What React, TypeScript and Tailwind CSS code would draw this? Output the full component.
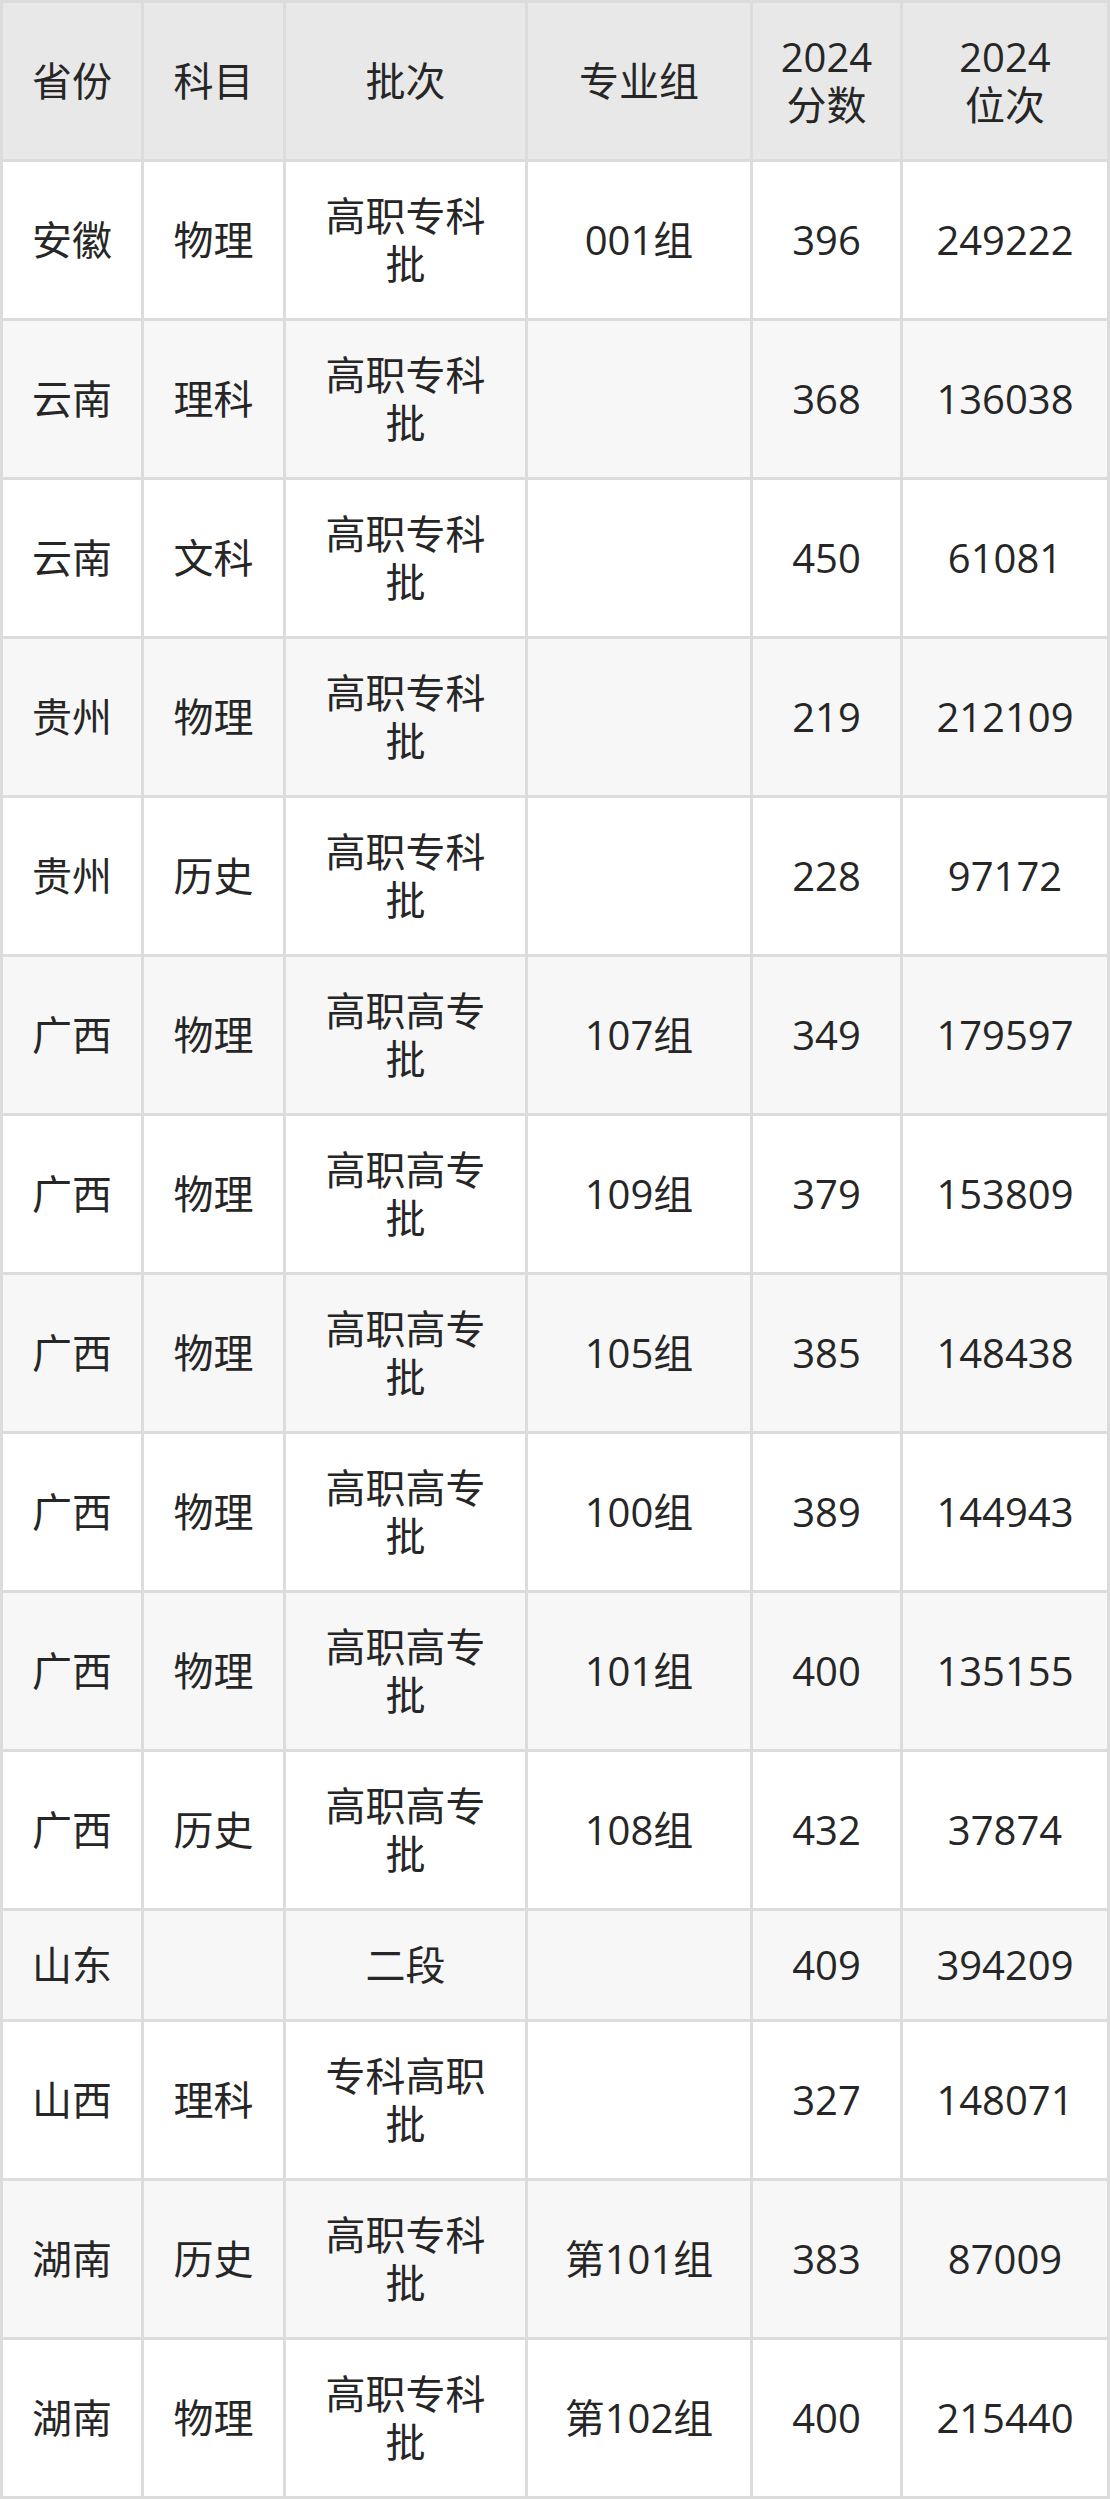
import React from "react";

type Row = [string, string, string, string, string, string];

const rows: Row[] = [
  ["安徽", "物理", "高职专科批", "001组", "396", "249222"],
  ["云南", "理科", "高职专科批", "", "368", "136038"],
  ["云南", "文科", "高职专科批", "", "450", "61081"],
  ["贵州", "物理", "高职专科批", "", "219", "212109"],
  ["贵州", "历史", "高职专科批", "", "228", "97172"],
  ["广西", "物理", "高职高专批", "107组", "349", "179597"],
  ["广西", "物理", "高职高专批", "109组", "379", "153809"],
  ["广西", "物理", "高职高专批", "105组", "385", "148438"],
  ["广西", "物理", "高职高专批", "100组", "389", "144943"],
  ["广西", "物理", "高职高专批", "101组", "400", "135155"],
  ["广西", "历史", "高职高专批", "108组", "432", "37874"],
  ["山东", "", "二段", "", "409", "394209"],
  ["山西", "理科", "专科高职批", "", "327", "148071"],
  ["湖南", "历史", "高职专科批", "第101组", "383", "87009"],
  ["湖南", "物理", "高职专科批", "第102组", "400", "215440"],
];

const headers = ["省份", "科目", "批次", "专业组", "2024分数", "2024位次"];

function Cell({ children, bg }: { children: React.ReactNode; bg: string }) {
  return (
    <div
      className={`${bg} flex items-center justify-center text-center px-[24px] py-[30px] min-h-[156px] break-words`}
    >
      <span className="block">{children}</span>
    </div>
  );
}

function SingleCell({ children, bg }: { children: React.ReactNode; bg: string }) {
  return (
    <div className={`${bg} flex items-center justify-center text-center px-[24px] py-[30px] h-[108px]`}>
      <span className="block">{children}</span>
    </div>
  );
}

export default function App() {
  return (
    <div
      className="w-[1110px] bg-white text-[#262626] text-[40px] leading-[48px]"
      style={{ fontFamily: '"Open Sans", "Noto Sans CJK SC", sans-serif' }}
    >
      <div className="grid grid-cols-[138px_139px_239px_222px_147px_204px] gap-[3px] p-[3px] bg-[#dcdcdc]">
        {headers.map((h) => (
          <Cell key={h} bg="bg-[#e8e8e8]">
            {h.startsWith("2024") ? (
              <>
                2024
                <br />
                {h.slice(4)}
              </>
            ) : (
              h
            )}
          </Cell>
        ))}
        {rows.map((r, i) => {
          const bg = i % 2 === 1 ? "bg-[#f7f7f7]" : "bg-white";
          const single = r[2] === "二段";
          return r.map((c, j) =>
            single ? (
              <SingleCell key={`${i}-${j}`} bg={bg}>
                {c}
              </SingleCell>
            ) : (
              <Cell key={`${i}-${j}`} bg={bg}>
                {c}
              </Cell>
            )
          );
        })}
      </div>
    </div>
  );
}
